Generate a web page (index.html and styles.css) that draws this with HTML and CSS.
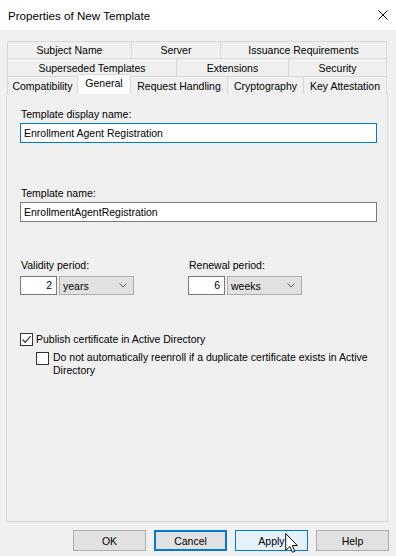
FILE: index.html
```html
<!DOCTYPE html>
<html>
<head>
<meta charset="utf-8">
<link rel="stylesheet" href="styles.css">
</head>
<body>
<div class="titlebar">
  <span class="title">Properties of New Template</span>
  <svg class="close" width="10" height="10" viewBox="0 0 10 10"><path d="M0.5 0.5 L9.5 9.5 M9.5 0.5 L0.5 9.5" stroke="#000" stroke-width="1" fill="none"/></svg>
</div>
<div class="main">
  <div class="tabs">
    <div class="tabrow r1">
      <div class="tab">Subject Name</div>
      <div class="tab">Server</div>
      <div class="tab">Issuance Requirements</div>
    </div>
    <div class="tabrow r2">
      <div class="tab">Superseded Templates</div>
      <div class="tab">Extensions</div>
      <div class="tab">Security</div>
    </div>
    <div class="tabrow r3">
      <div class="tab before-sel">Compatibility</div>
      <div class="tab selected">General</div>
      <div class="tab">Request Handling</div>
      <div class="tab">Cryptography</div>
      <div class="tab">Key Attestation</div>
    </div>
  </div>
  <div class="panel">
    <div class="lbl">Template display name:</div>
    <div class="field focus">Enrollment Agent Registration</div>
    <div class="lbl lbl2">Template name:</div>
    <div class="field">EnrollmentAgentRegistration</div>
    <div class="periods">
      <div class="pgroup">
        <div class="lbl">Validity period:</div>
        <div class="pctrl">
          <div class="num">2</div>
          <div class="dd"><span>years</span><svg width="8" height="5" viewBox="0 0 8 5"><path d="M0.5 0.5 L4 4 L7.5 0.5" stroke="#606060" stroke-width="1" fill="none"/></svg></div>
        </div>
      </div>
      <div class="pgroup">
        <div class="lbl">Renewal period:</div>
        <div class="pctrl">
          <div class="num">6</div>
          <div class="dd"><span>weeks</span><svg width="8" height="5" viewBox="0 0 8 5"><path d="M0.5 0.5 L4 4 L7.5 0.5" stroke="#606060" stroke-width="1" fill="none"/></svg></div>
        </div>
      </div>
    </div>
    <div class="check-row">
      <div class="box"><svg width="11" height="11" viewBox="0 0 11 11"><path d="M1.5 5.5 L4.2 8.3 L9.6 2.2" stroke="#333" stroke-width="1.2" fill="none"/></svg></div>
      <span>Publish certificate in Active Directory</span>
    </div>
    <div class="check-row2">
      <div class="box box2"></div>
      <span>Do not automatically reenroll if a duplicate certificate exists in Active<br>Directory</span>
    </div>
  </div>
  <div class="buttons">
    <div class="btn">OK</div>
    <div class="btn btn-default">Cancel</div>
    <div class="btn btn-hover">Apply</div>
    <div class="btn">Help</div>
  </div>
</div>
<svg class="cursor" width="15" height="20" viewBox="0 0 12 19"><path d="M0.5 0.5 L0.5 16.5 L4.4 12.8 L6.9 18.3 L9.2 17.3 L6.8 11.9 L11.5 11.9 Z" fill="#fff" stroke="#000" stroke-width="0.9" stroke-linejoin="miter"/></svg>
</body>
</html>
```
FILE: styles.css
```css
* { box-sizing: border-box; }
html, body { margin: 0; padding: 0; }
body {
  width: 396px;
  height: 556px;
  background: #f0f0f0;
  font-family: "Liberation Sans", Arial, sans-serif;
  font-size: 10.5px;
  color: #000;
  overflow: hidden;
  position: relative;
}
.titlebar {
  height: 30px;
  background: #fff;
  display: flex;
  align-items: center;
  justify-content: space-between;
  padding: 0 8px 0 8px;
  font-size: 11.6px;
}
.title { margin-top: 1px; }
.close { display: block; }
.main { padding: 11px 8px 0 6px; }
.tabs { margin: 0 1px; }
.tabrow { display: grid; }
.r1 { grid-template-columns: 125px 89px 1fr; height: 17px; }
.r2 { grid-template-columns: 170px 112px 1fr; height: 18px; }
.r3 { grid-template-columns: 70px 54px 97px 76px 1fr; height: 17px; }
.tab {
  border-top: 1px solid #d9d9d9;
  border-right: 1px solid #d9d9d9;
  display: flex;
  align-items: center;
  justify-content: center;
  white-space: nowrap;
  background: #f0f0f0;
}
.tab:first-child { border-left: 1px solid #d9d9d9; }
.tab.before-sel { border-right: none; }
.tab.selected {
  margin-top: -2px;
  height: 20px;
  background: #fff;
  border-left: 1px solid #d9d9d9;
  position: relative;
  z-index: 1;
  padding-bottom: 3px;
}
.panel {
  height: 429px;
  border: 1px solid #d9d9d9;
  background: #f0f0f0;
  padding: 13px 10px 0 13px;
}
.lbl { line-height: 14px; height: 14px; padding-left: 1px; white-space: nowrap; }
.lbl2 { margin-top: 43px; }
.field {
  margin-top: 2px;
  height: 20px;
  border: 1px solid #7a7a7a;
  background: #fff;
  padding: 0 3px;
  line-height: 18px;
  white-space: nowrap;
}
.field.focus { border-color: #0078d7; }
.periods {
  margin-top: 36px;
  display: grid;
  grid-template-columns: 168px auto;
}
.pctrl { margin-top: 4px; display: flex; gap: 2px; }
.num {
  width: 37px;
  height: 19px;
  border: 1px solid #7a7a7a;
  background: #fff;
  text-align: right;
  padding-right: 4px;
  line-height: 17px;
}
.dd {
  width: 75px;
  height: 19px;
  border: 1px solid #adadad;
  background: #e1e1e1;
  display: flex;
  align-items: center;
  justify-content: space-between;
  padding: 0 6px 0 3px;
}
.dd span { margin-top: 1px; }
.dd svg { display: block; }
.check-row {
  margin-top: 37px;
  height: 14px;
  display: flex;
  align-items: center;
  gap: 3px;
}
.box {
  width: 13px;
  height: 13px;
  border: 1px solid #333;
  background: #fff;
  flex: none;
}
.box svg { display: block; }
.check-row2 {
  margin-top: 5px;
  padding-left: 16px;
  display: flex;
  align-items: flex-start;
  gap: 4px;
  line-height: 13px;
}
.box2 { margin-top: 1px; }
.buttons {
  display: flex;
  justify-content: flex-end;
  gap: 8px;
  margin-top: 8px;
  margin-right: -1px;
}
.btn {
  width: 73px;
  height: 21px;
  border: 1px solid #adadad;
  background: #e1e1e1;
  display: flex;
  align-items: center;
  justify-content: center;
}
.btn-default { border: 2px solid #0078d7; }
.btn-hover { border: 1px solid #0078d7; background: #e5f1fb; }
.cursor { position: absolute; left: 284px; top: 533px; }
```
